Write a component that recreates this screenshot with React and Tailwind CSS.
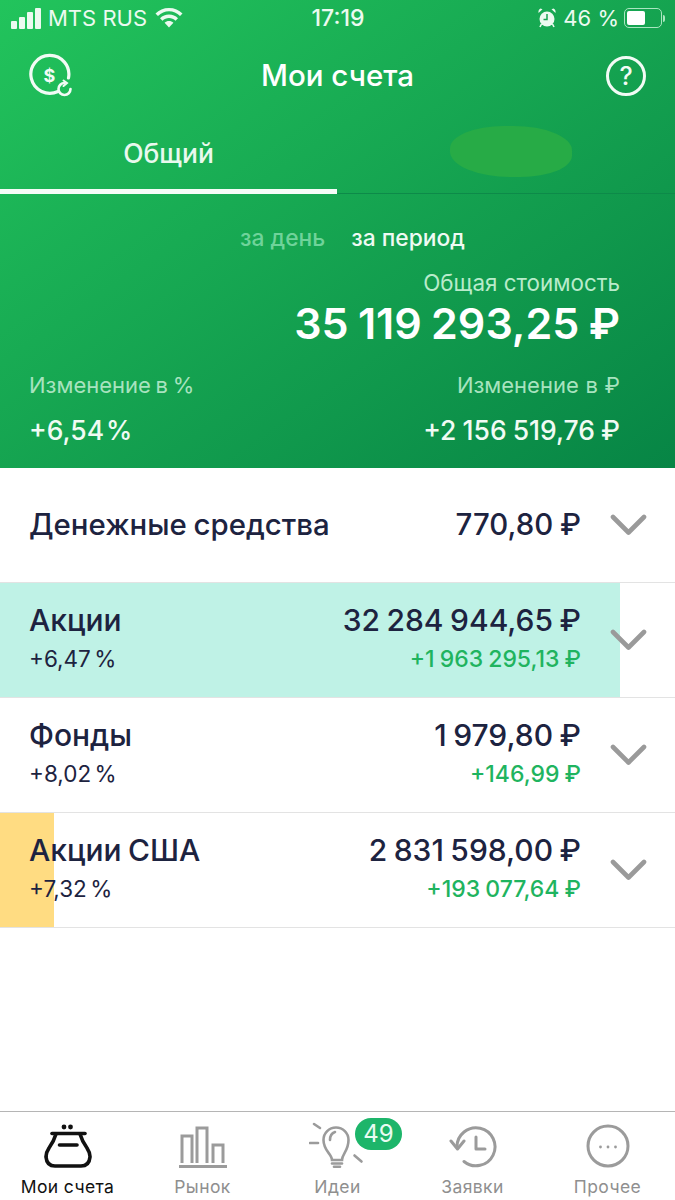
const FONT = "[font-family:Inter,'Noto_Sans',sans-serif]";

const rows = [
  { title: "Акции", pct: "+6,47 %", sum: "32 284 944,65 ₽", delta: "+1 963 295,13 ₽", bar: "w-[620px] bg-[#bff2e6]" },
  { title: "Фонды", pct: "+8,02 %", sum: "1 979,80 ₽", delta: "+146,99 ₽", bar: "" },
  { title: "Акции США", pct: "+7,32 %", sum: "2 831 598,00 ₽", delta: "+193 077,64 ₽", bar: "w-[54px] bg-[#ffdc82]" },
];

const Chevron = () => (
  <svg className="ml-[29px] shrink-0" width="37" height="24" viewBox="0 0 37 24" fill="none" stroke="#9a9a9a" strokeWidth="4.6" strokeLinecap="round" strokeLinejoin="round">
    <path d="M3 4 L18.5 19.5 L34 4" />
  </svg>
);

const DollarIcon = () => (
  <svg width="46" height="46" viewBox="0 0 46 46" fill="none" stroke="#f2fbf5" strokeWidth="3.2" strokeLinecap="round">
    <path d="M30 38.5 A19 19 0 1 1 40.5 25" />
    <path d="M42.5 36 A6 6 0 1 1 36.5 30" strokeWidth="2.6" />
    <path d="M35.5 27.5 L39 30 L35.5 33" strokeWidth="2" />
    <text x="21.5" y="28.5" textAnchor="middle" fontSize="18" fontWeight="700" fill="#f2fbf5" stroke="none" fontFamily="Inter">$</text>
  </svg>
);

const HelpIcon = () => (
  <svg width="42" height="42" viewBox="0 0 42 42" fill="none" stroke="#f2fbf5" strokeWidth="3">
    <circle cx="21" cy="21" r="18.5" />
    <text x="21" y="30" textAnchor="middle" fontSize="25" fontWeight="500" fill="#f2fbf5" stroke="none" fontFamily="Inter">?</text>
  </svg>
);

const Purse = () => (
  <svg width="48" height="46" viewBox="0 0 48 46" fill="none" stroke="#111" strokeWidth="3.6" strokeLinecap="round" strokeLinejoin="round">
    <circle cx="20" cy="5" r="2.4" fill="#111" stroke="none" />
    <circle cx="26.5" cy="5" r="2.4" fill="#111" stroke="none" />
    <path d="M8 11.5 H41" />
    <path d="M12 12 Q10 19 5 26 Q1.8 31 2 35 Q2.8 44 11 44 H37 Q45.2 44 46 35 Q46.2 31 43 26 Q38 19 36 12" />
    <path d="M15.5 23 H33" />
  </svg>
);

const Market = () => (
  <svg width="50" height="42" viewBox="0 0 50 42" fill="none" stroke="#9b9b9b" strokeWidth="3">
    <path d="M4 37 V10 H14 V37" />
    <path d="M19 37 V2 H29 V37" />
    <path d="M35 37 V19 H45 V37" />
    <path d="M1 40.5 H49" strokeWidth="2.8" />
  </svg>
);

const Bulb = () => (
  <svg width="58" height="50" viewBox="0 0 58 50" fill="none" stroke="#9b9b9b" strokeWidth="2.6" strokeLinecap="round">
    <path d="M5 6 L11 10" />
    <path d="M1 25 H9" />
    <path d="M45.5 37.5 L52.5 43.5" />
    <path d="M23 42 C23 36 14.5 33 14.5 22 A12.5 12.5 0 0 1 39.5 22 C39.5 33 33 36 33 42 Z" />
    <path d="M21 22 C21 17 23 15 26 14" />
    <path d="M23 45.5 H33" />
    <path d="M25 48.7 H31" />
  </svg>
);

const History = () => (
  <svg width="48" height="42" viewBox="0 0 48 42" fill="none" stroke="#9b9b9b" strokeWidth="3" strokeLinecap="round" strokeLinejoin="round">
    <path d="M8 21 A19 19 0 1 1 15 35.5" />
    <path d="M2 15 L8.5 23 L15 15" />
    <path d="M27 11 V23 H36" />
  </svg>
);

const More = () => (
  <svg width="44" height="44" viewBox="0 0 44 44" fill="none" stroke="#9b9b9b" strokeWidth="3">
    <circle cx="22" cy="22" r="20" />
    <circle cx="14.5" cy="23" r="1.4" fill="#9b9b9b" stroke="none" />
    <circle cx="22" cy="23" r="1.4" fill="#9b9b9b" stroke="none" />
    <circle cx="29.5" cy="23" r="1.4" fill="#9b9b9b" stroke="none" />
  </svg>
);

const Wifi = () => (
  <svg width="28" height="20" viewBox="0 0 28 20" fill="#ecfaf0">
    <path d="M14 0 C8.5 0 4 2 0.5 5.5 L3 8 C6 5 10 3.3 14 3.3 C18 3.3 22 5 25 8 L27.5 5.5 C24 2 19.5 0 14 0 Z" />
    <path d="M14 6.5 C10.5 6.5 7.5 7.8 5 10.2 L7.5 12.7 C9.3 11 11.5 10 14 10 C16.5 10 18.7 11 20.5 12.7 L23 10.2 C20.5 7.8 17.5 6.5 14 6.5 Z" />
    <path d="M14 13 C12.3 13 10.8 13.6 9.6 14.8 L14 19.5 L18.4 14.8 C17.2 13.6 15.7 13 14 13 Z" />
  </svg>
);

const Alarm = () => (
  <svg width="18" height="20" viewBox="0 0 18 20" fill="#ecfaf0">
    <circle cx="9" cy="11" r="7.5" />
    <path d="M0.5 5 L4.5 1.2 L2.5 0.5 Q0 1.5 0.5 5 Z M17.5 5 L13.5 1.2 L15.5 0.5 Q18 1.5 17.5 5 Z" />
    <path d="M3.5 16 L2 19 M14.5 16 L16 19" stroke="#ecfaf0" strokeWidth="1.6" />
    <path d="M9 6 V11.5 H5.5" stroke="#18a350" strokeWidth="1.5" fill="none" />
  </svg>
);

function Row({ title, pct, sum, delta, bar }) {
  return (
    <div className="relative h-[115px] border-b border-[#e3e3e3]">
      {bar && <div className={`absolute left-0 top-0 h-full ${bar}`} />}
      <div className="relative flex h-full items-center pl-[29px] pr-[28px]">
        <div className="flex flex-1 justify-between pb-[6px] [word-spacing:-1.5px]">
          <div>
            <div className="text-[30px] leading-[38px] font-medium text-[#1d2340]">{title}</div>
            <div className="mt-[6px] text-[22.5px] leading-[28px] text-[#1d2340] [word-spacing:-3px]">{pct}</div>
          </div>
          <div className="text-right">
            <div className="text-[30px] leading-[38px] font-medium text-[#1d2340]">{sum}</div>
            <div className="mt-[6px] text-[23px] leading-[28px] font-medium text-[#1fb45f] [word-spacing:-1px]">{delta}</div>
          </div>
        </div>
        <Chevron />
      </div>
    </div>
  );
}

function Tab({ icon, label, active }) {
  return (
    <div className="flex flex-1 flex-col items-center">
      <div className="flex h-[56px] items-end">{icon}</div>
      <div className={`mt-[9px] text-[17.5px] leading-[20px] tracking-[0.4px] ${active ? "text-[#111]" : "text-[#8f8f8f]"}`}>{label}</div>
    </div>
  );
}

export default function App() {
  return (
    <div className={`flex h-[1200px] w-[675px] flex-col overflow-hidden bg-white ${FONT}`}>
      <div className="h-[468px] bg-gradient-to-br from-[#22c45c] to-[#078545] text-white">
        <div className="flex h-[36px] items-center justify-between pl-[11px] pr-[10px] text-[22px] text-[#ecfaf0]">
          <div className="flex flex-1 items-center">
            <div className="flex items-end gap-[2px]">
              <div className="h-[8px] w-[6px] rounded-[1px] bg-[#ecfaf0]" />
              <div className="h-[12px] w-[6px] rounded-[1px] bg-[#ecfaf0]" />
              <div className="h-[17px] w-[6px] rounded-[1px] bg-[#ecfaf0]" />
              <div className="h-[21px] w-[6px] rounded-[1px] bg-[#ecfaf0]" />
            </div>
            <span className="ml-[7px]">MTS RUS</span>
            <span className="ml-[8px]"><Wifi /></span>
          </div>
          <div className="text-[23px] font-medium">17:19</div>
          <div className="flex flex-1 items-center justify-end">
            <Alarm />
            <span className="ml-[7px]">46 %</span>
            <div className="ml-[5px] h-[20px] w-[38px] rounded-[5px] border border-[#a9e6c0] p-[2px]">
              <div className="h-full w-[18px] rounded-[2px] bg-white" />
            </div>
            <div className="ml-[1px] h-[7px] w-[2px] rounded-r bg-[#a9e6c0]" />
          </div>
        </div>
        <div className="mt-[17px] flex h-[46px] items-center justify-between pl-[28px] pr-[28px]">
          <DollarIcon />
          <div className="ml-[-4px] mt-[-2px] text-[29.5px] font-medium">Мои счета</div>
          <HelpIcon />
        </div>
        <div className="mt-[17px] flex h-[78px] border-b border-[#0d8a49]">
          <div className="-mb-px flex w-[337px] justify-center border-b-[5px] border-[#f5fcf7] pt-[21px]">
            <span className="text-[26.5px] leading-[32px] font-medium text-[#e9f9ee]">Общий</span>
          </div>
          <div className="flex flex-1 justify-center pt-[10px]">
            <div className="ml-[9px] h-[51px] w-[122px] rounded-[44%_48%_42%_50%] bg-[#27ab46]" />
          </div>
        </div>
        <div className="flex justify-center gap-[26px] pl-[30px] pt-[30px] text-[22.8px] leading-[28px] font-medium">
          <span className="text-[#6fd39a]">за день</span>
          <span className="text-[#effaf3]">за период</span>
        </div>
        <div className="pr-[55px] pt-[17px] text-right text-[22.4px] leading-[28px] text-[#b9ebcb]">Общая стоимость</div>
        <div className="pr-[55px] pt-[1px] text-right text-[43px] leading-[50px] font-semibold [word-spacing:-1.5px]">35 119 293,25 ₽</div>
        <div className="flex justify-between pl-[29px] pr-[55px] pt-[23px] text-[22px] leading-[28px] text-[#a8e3bf]">
          <span className="[word-spacing:-1.5px]">Изменение в %</span>
          <span className="[word-spacing:0.5px]">Изменение в ₽</span>
        </div>
        <div className="flex justify-between pl-[29px] pr-[55px] pt-[15px] text-[26.5px] leading-[32px] font-medium text-[#f0fbf4]">
          <span className="[word-spacing:-5px]">+6,54 %</span>
          <span className="[word-spacing:-1px]">+2 156 519,76 ₽</span>
        </div>
      </div>

      <div className="flex h-[115px] items-center border-b border-[#e3e3e3] pl-[29px] pr-[28px]">
        <div className="flex flex-1 justify-between text-[29.4px] font-medium text-[#1d2340] [word-spacing:-1px]">
          <span>Денежные средства</span>
          <span>770,80 ₽</span>
        </div>
        <Chevron />
      </div>
      {rows.map((r) => (
        <Row key={r.title} {...r} />
      ))}

      <div className="flex-1" />

      <div className="flex h-[89px] border-t border-[#b5b5b5]">
        <Tab icon={<Purse />} label="Мои счета" active />
        <Tab icon={<Market />} label="Рынок" />
        <div className="relative flex flex-1 flex-col items-center">
          <Tab icon={<Bulb />} label="Идеи" />
          <div className="absolute left-[85px] top-[6px] flex h-[32px] w-[47px] items-center justify-center rounded-full bg-[#1db56a] text-[24px] text-[#e9fbf2]">49</div>
        </div>
        <Tab icon={<History />} label="Заявки" />
        <Tab icon={<More />} label="Прочее" />
      </div>
    </div>
  );
}
